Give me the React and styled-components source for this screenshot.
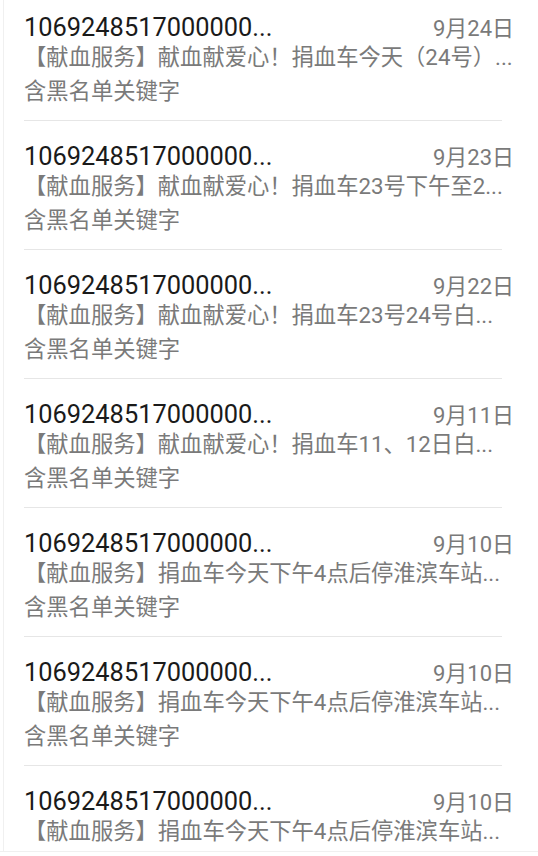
import styled, { createGlobalStyle } from 'styled-components';

const GlobalStyle = createGlobalStyle`
  html, body {
    margin: 0;
    padding: 0;
    background: #ffffff;
  }
  body {
    font-family: Roboto, 'Noto Sans CJK SC', sans-serif;
    overflow: hidden;
  }
`;

const Screen = styled.div`
  width: 538px;
  height: 856px;
  background: #ffffff;
`;

const Viewport = styled.div`
  height: 852px;
  box-sizing: border-box;
  padding-left: 3px;
  overflow: hidden;
  border-bottom: 1px solid #f0f0f0;
`;

const List = styled.div`
  border-left: 1px solid #f0f0f0;
  margin-top: -8px;
  padding-left: 20px;
  padding-right: 24px;
`;

const Item = styled.div`
  padding: 17px 0 9px;
  border-bottom: 1px solid #e6e6e6;
  margin-right: 12px;
`;

const TopRow = styled.div`
  display: flex;
  align-items: center;
  justify-content: space-between;
  height: 33px;
  margin-right: -12px;
`;

const Sender = styled.div`
  font-size: 25.4px;
  color: #1a1a1a;
  white-space: nowrap;
  padding-top: 2px;
`;

const Time = styled.div`
  font-size: 22px;
  color: #7a7a7a;
  white-space: nowrap;
  padding-top: 1px;
`;

const Body = styled.div`
  font-size: 22.3px;
  color: #7a7a7a;
  line-height: 30px;
  white-space: nowrap;
  margin-right: -12px;
`;

const Tag = styled.div`
  font-size: 22.3px;
  color: #7a7a7a;
  line-height: 39px;
`;

const messages = [
  { time: '9月24日', text: '【献血服务】献血献爱心！捐血车今天（24号）...' },
  { time: '9月23日', text: '【献血服务】献血献爱心！捐血车23号下午至2...' },
  { time: '9月22日', text: '【献血服务】献血献爱心！捐血车23号24号白...' },
  { time: '9月11日', text: '【献血服务】献血献爱心！捐血车11、12日白...' },
  { time: '9月10日', text: '【献血服务】捐血车今天下午4点后停淮滨车站...' },
  { time: '9月10日', text: '【献血服务】捐血车今天下午4点后停淮滨车站...' },
  { time: '9月10日', text: '【献血服务】捐血车今天下午4点后停淮滨车站...' },
];

export default function App() {
  return (
    <>
      <GlobalStyle />
      <Screen>
        <Viewport>
          <List>
            {messages.map((m, i) => (
              <Item key={i}>
                <TopRow>
                  <Sender>1069248517000000...</Sender>
                  <Time>{m.time}</Time>
                </TopRow>
                <Body>{m.text}</Body>
                <Tag>含黑名单关键字</Tag>
              </Item>
            ))}
          </List>
        </Viewport>
      </Screen>
    </>
  );
}
